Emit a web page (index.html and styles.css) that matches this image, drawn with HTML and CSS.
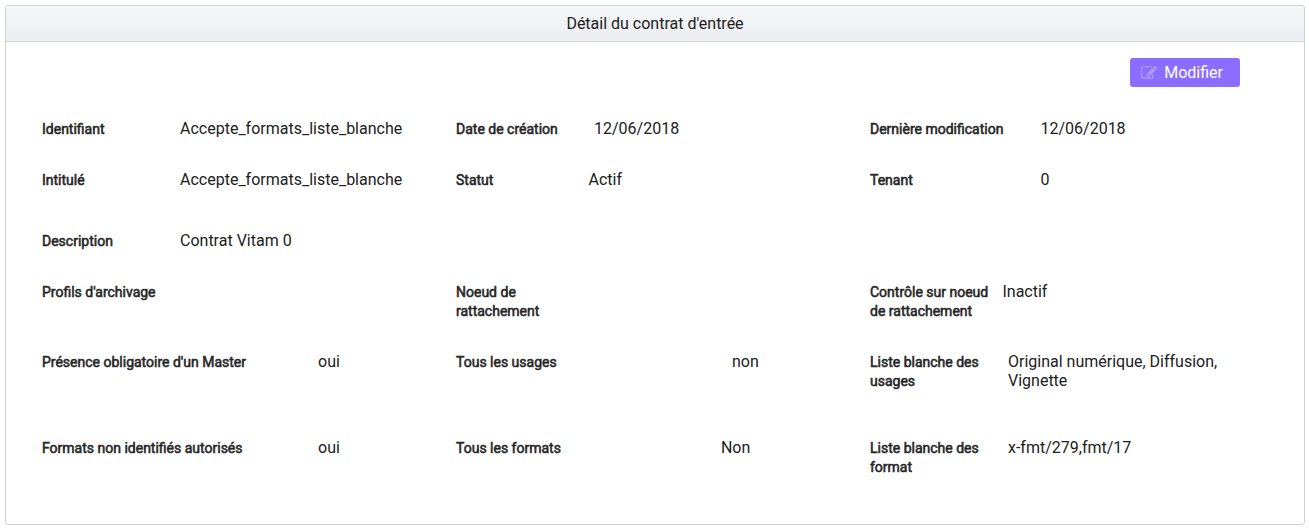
FILE: index.html
```html
<!DOCTYPE html>
<html lang="fr">
<head>
<meta charset="utf-8">
<meta name="viewport" content="width=device-width, initial-scale=1">
<title>Détail du contrat d'entrée</title>
<link rel="stylesheet" href="styles.css">
</head>
<body>
<main class="panel">
  <h1 class="panel-title">Détail du contrat d'entrée</h1>
  <div class="panel-content">
    <div class="toolbar">
      <button class="button" type="button">
        <svg class="button-icon" viewBox="0 0 1792 1792" aria-hidden="true"><path fill="currentColor" d="M888 1184l116-116-152-152-116 116v56h96v96h56zm440-720q-16-16-33 1l-350 350q-17 17-1 33t33-1l350-350q17-17 1-33zm80 594v190q0 119-84.500 203.500t-203.500 84.500h-832q-119 0-203.500-84.500t-84.500-203.500v-832q0-119 84.500-203.500t203.500-84.500h832q63 0 117 25 15 7 18 23 3 17-9 29l-49 49q-14 14-32 8-23-6-45-6h-832q-66 0-113 47t-47 113v832q0 66 47 113t113 47h832q66 0 113-47t47-113v-126q0-13 9-22l64-64q15-15 35-7t20 29zm-96-738l288 288-672 672h-288v-288zm444 132l-92 92-288-288 92-92q28-28 68-28t68 28l152 152q28 28 28 68t-28 68z"/></svg>
        <span>Modifier</span>
      </button>
    </div>
    <dl class="details">
      <div class="row">
        <div class="field"><dt>Identifiant</dt><dd>Accepte_formats_liste_blanche</dd></div>
        <div class="field"><dt>Date de création</dt><dd>12/06/2018</dd></div>
        <div class="field field-medium"><dt>Dernière modification</dt><dd>12/06/2018</dd></div>
      </div>
      <div class="row row-spaced">
        <div class="field"><dt>Intitulé</dt><dd>Accepte_formats_liste_blanche</dd></div>
        <div class="field field-narrow"><dt>Statut</dt><dd>Actif</dd></div>
        <div class="field field-medium"><dt>Tenant</dt><dd>0</dd></div>
      </div>
      <div class="row">
        <div class="field"><dt>Description</dt><dd>Contrat Vitam 0</dd></div>
      </div>
      <div class="row">
        <div class="field"><dt>Profils d'archivage</dt><dd></dd></div>
        <div class="field"><dt>Noeud de rattachement</dt><dd></dd></div>
        <div class="field field-narrow"><dt>Contrôle sur noeud de rattachement</dt><dd>Inactif</dd></div>
      </div>
      <div class="row row-list">
        <div class="field field-wide"><dt>Présence obligatoire d'un Master</dt><dd>oui</dd></div>
        <div class="field field-wide"><dt>Tous les usages</dt><dd>non</dd></div>
        <div class="field"><dt>Liste blanche des usages</dt><dd>Original numérique, Diffusion, Vignette</dd></div>
      </div>
      <div class="row">
        <div class="field field-wide"><dt>Formats non identifiés autorisés</dt><dd>oui</dd></div>
        <div class="field field-status"><dt>Tous les formats</dt><dd>Non</dd></div>
        <div class="field"><dt>Liste blanche des format</dt><dd>x-fmt/279,fmt/17</dd></div>
      </div>
    </dl>
  </div>
</main>
</body>
</html>
```
FILE: styles.css
```css
* {
  box-sizing: border-box;
}

body {
  margin: 5px 4px 4px 5px;
  background: #fff;
  color: #212121;
  font: 16px/19px Roboto, "Liberation Sans", sans-serif;
}

.panel {
  border: 1px solid #d0d2d4;
  border-radius: 3px;
}

.panel-title {
  margin: 0;
  padding: 8px 16px;
  border-bottom: 1px solid #d5d6d9;
  border-radius: 2px 2px 0 0;
  background: linear-gradient(#f6f7f9, #ebedf0);
  font-size: 16px;
  font-weight: 400;
  text-align: center;
}

.panel-content {
  padding: 16px 20px 48px 36px;
}

.toolbar {
  display: flex;
  justify-content: flex-end;
  padding-right: 44px;
  margin-bottom: 32px;
}

.button {
  display: flex;
  align-items: center;
  gap: 7px;
  padding: 5px 17px 5px 11px;
  border: 0;
  border-radius: 3px;
  background: #8c6eff;
  color: #fff;
  font: inherit;
}

.button-icon {
  width: 16px;
  height: 16px;
  color: #b4a0ff;
}

.details {
  margin: 0;
}

.row {
  display: grid;
  grid-template-columns: repeat(3, 1fr);
  margin-bottom: 32px;
}

.row:last-child {
  margin-bottom: 0;
}

.row-spaced {
  margin-bottom: 42px;
}

.row-list {
  margin-bottom: 48px;
}

.field {
  display: grid;
  grid-template-columns: 1fr 2fr;
}

.field-narrow {
  grid-template-columns: 32% 1fr;
}

.field-medium {
  grid-template-columns: 7fr 10fr;
}

.field-wide {
  grid-template-columns: 2fr 1fr;
}

.field-status {
  grid-template-columns: 64% 1fr;
}

dt {
  margin-bottom: -1px;
  padding: 1px 14px 0 0;
  color: #262626;
  font-size: 14px;
  -webkit-text-stroke: 0.04em currentColor;
}

dd {
  margin: 0;
  padding-right: 44px;
}
```
